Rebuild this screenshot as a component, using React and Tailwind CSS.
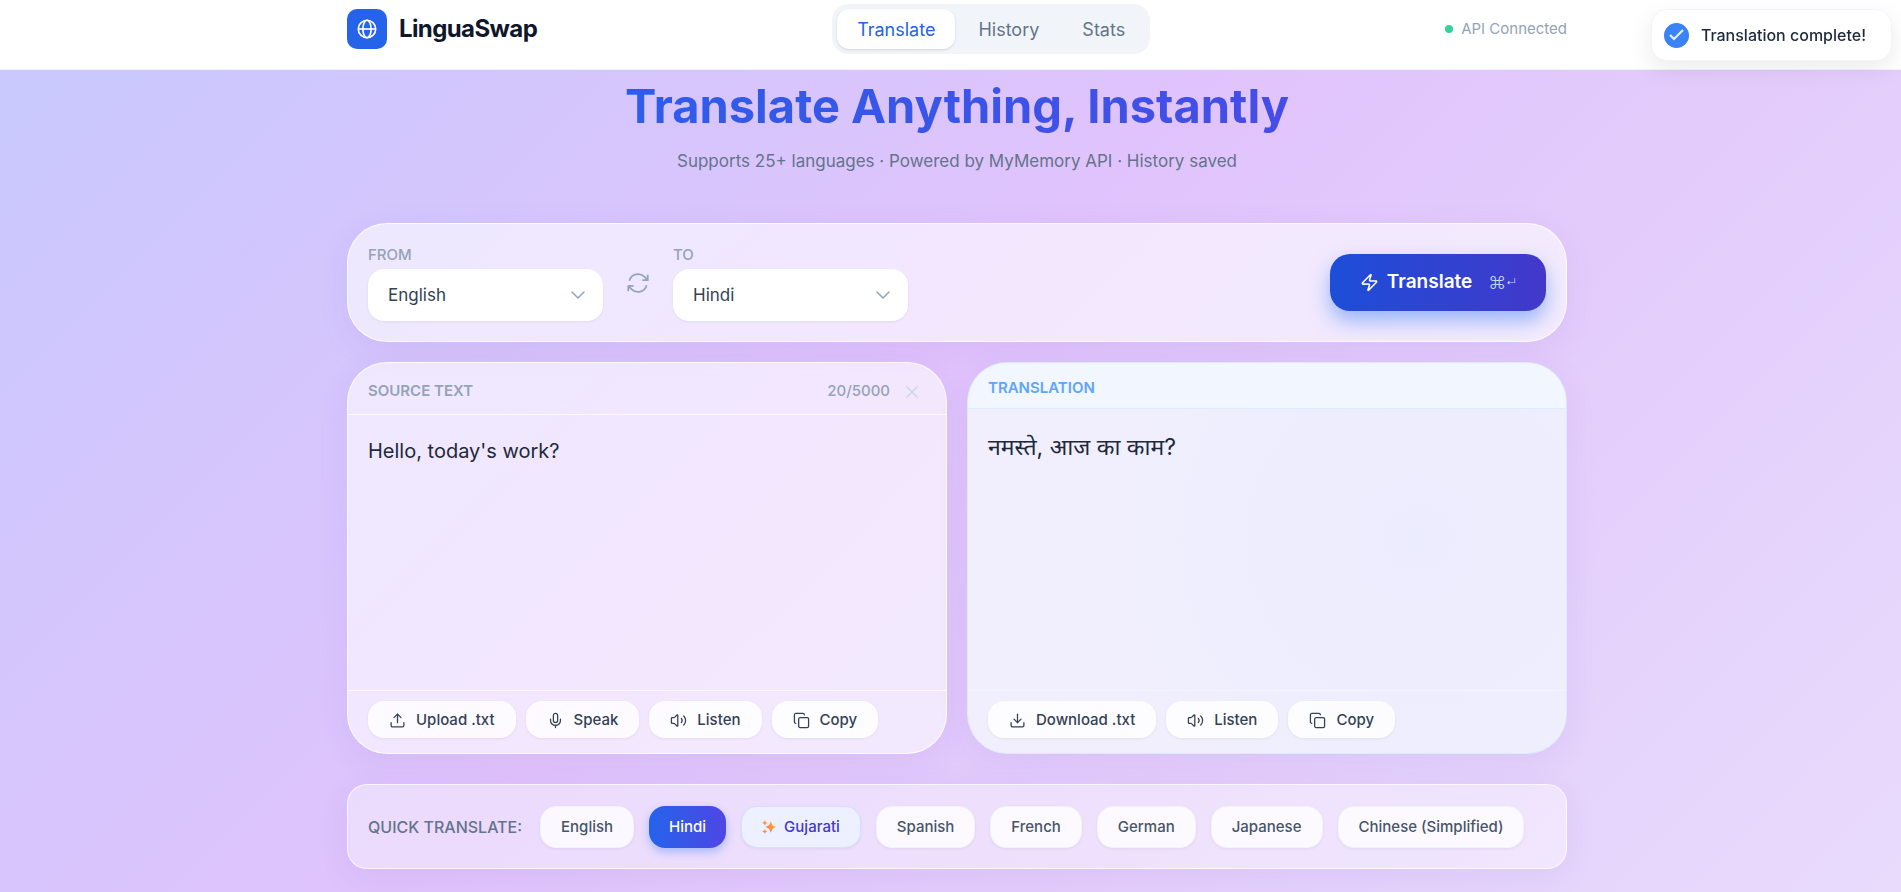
import { Zap, Upload, Download, Mic, Volume2, Copy, X, ChevronDown } from 'lucide-react';

const LANGUAGES = ['English', 'Hindi', 'Gujarati', 'Spanish', 'French', 'German', 'Japanese', 'Chinese (Simplified)'];
const TABS = ['Translate', 'History', 'Stats'];

const cardStyles = 'border shadow-[0_8px_32px_rgba(99,60,180,0.08)]';
const actionStyles = 'flex h-[37px] items-center gap-[10px] rounded-2xl bg-white/85 px-[21px] pt-px text-[15px] font-medium text-[#334155] shadow-[0_1px_3px_rgba(0,0,0,0.06)]';
const chipStyles = 'flex h-[42px] items-center rounded-2xl px-5 pt-px text-[15px] font-medium';

function GlobeIcon() {
  return (
    <svg width="22" height="22" viewBox="0 0 24 24" fill="none" stroke="currentColor" strokeWidth="1.8">
      <circle cx="12" cy="12" r="9.5" />
      <ellipse cx="12" cy="12" rx="4.5" ry="9.5" />
      <path d="M2.5 12h19" />
    </svg>
  );
}

function SwapIcon() {
  return (
    <svg width="26" height="26" viewBox="0 0 24 24" fill="none" stroke="currentColor" strokeWidth="1.6">
      <path d="M16.023 9.348h4.992v-.001M2.985 19.644v-4.992m0 0h4.992m-4.993 0 3.181 3.183a8.25 8.25 0 0 0 13.803-3.7M4.031 9.865a8.25 8.25 0 0 1 13.803-3.7l3.181 3.182m0-4.991v4.99" />
    </svg>
  );
}

function SparklesIcon() {
  return (
    <svg width="14" height="14" viewBox="0 0 24 24">
      <defs>
        <linearGradient id="spark" x1="0" y1="1" x2="1" y2="0">
          <stop offset="0" stopColor="#fb7185" />
          <stop offset="0.5" stopColor="#fb923c" />
          <stop offset="1" stopColor="#fcd34d" />
        </linearGradient>
      </defs>
      <g fill="url(#spark)">
        <path d="M15 2l3 7 6 3-6 3-3 7-3-7-6-3 6-3z" />
        <path d="M5 0l1.5 3.5L10 5 6.500 6.500 5 10 3.500 6.500 0 5l3.500-1.500z" />
        <path d="M5 15l1.300 3.200L9.500 19.500l-3.200 1.300L5 24l-1.300-3.200L.5 19.500l3.200-1.300z" />
      </g>
    </svg>
  );
}

function LanguageSelect({ id, label, value }) {
  return (
    <div className="flex w-[235px] flex-col gap-1">
      <label htmlFor={id} className="text-[15px] leading-5 font-medium text-[#94a3b8] uppercase">{label}</label>
      <div className="relative">
        <select
          id={id}
          defaultValue={value}
          className="h-[52px] w-full appearance-none rounded-2xl bg-white px-5 pt-[2px] text-[17px] text-[#334155] shadow-[0_1px_3px_rgba(0,0,0,0.06)]"
        >
          {LANGUAGES.map(l => <option key={l}>{l}</option>)}
        </select>
        <ChevronDown size={24} strokeWidth={1.5} className="pointer-events-none absolute top-[14px] right-[13px] text-[#94a3b8]" />
      </div>
    </div>
  );
}

function ActionButton({ icon: Icon, children }) {
  return (
    <button className={actionStyles}>
      <Icon size={17} strokeWidth={1.8} /> {children}
    </button>
  );
}

function Header() {
  return (
    <header className="border-b border-[#f1f5f9] bg-white pt-1 pb-[15px] pl-[13px]">
      <div className="mx-auto flex max-w-[1220px] items-center justify-between">
        <div className="flex items-center gap-3">
          <div className="flex h-10 w-10 items-center justify-center rounded-[10px] bg-[#2563eb] text-white">
            <GlobeIcon />
          </div>
          <span className="text-[24px] leading-8 font-bold tracking-tight text-[#0f172a]">LinguaSwap</span>
        </div>

        <nav className="flex gap-[3px] rounded-2xl bg-[#f1f5f9] p-[5px]">
          {TABS.map(tab => (
            <button
              key={tab}
              className={`h-10 rounded-xl px-5 text-[18px] ${tab === 'Translate' ? 'bg-white text-[#2563eb] shadow-sm' : 'text-[#64748b]'}`}
            >
              {tab}
            </button>
          ))}
        </nav>

        <div className="flex items-center gap-2 text-[15px] text-[#94a3b8]">
          <span className="h-2 w-2 rounded-full bg-[#34d399]" />
          API Connected
        </div>
      </div>
    </header>
  );
}

function Toast() {
  return (
    <div role="status" className="fixed top-[9px] right-[9px] flex h-[52px] items-center gap-3 rounded-2xl border border-[#f1f5f9] bg-white pr-[25px] pl-3 text-[16px] font-medium text-[#1e293b] shadow-[0_8px_24px_rgba(0,0,0,0.08)]">
      <span className="flex h-[25px] w-[25px] items-center justify-center rounded-full bg-[#3b82f6]">
        <svg width="15" height="12" viewBox="0 0 15 12" fill="none" stroke="#e5efff" strokeWidth="2.2">
          <path d="M1 6l4 4 9-9" />
        </svg>
      </span>
      Translation complete!
    </div>
  );
}

export default function App() {
  return (
    <div className="min-h-screen bg-[linear-gradient(135deg,#c7c9fe_0%,#e0c3fc_46%,#e8dbfc_100%)] font-['Inter',sans-serif]">
      <Header />

      <main className="pb-[23px] pl-[13px]">
        <div className="mx-auto max-w-[1220px]">
          <div className="pt-[6px] text-center">
            <h1 className="bg-[linear-gradient(90deg,#2563eb,#4f46e5)] bg-clip-text text-[47px] leading-[60px] font-bold text-transparent">
              Translate Anything, Instantly
            </h1>
            <p className="mt-[11px] text-[17px] leading-7 text-[#64748b]">Supports 25+ languages · Powered by MyMemory API · History saved</p>
          </div>

          <section className={`mt-12 flex h-[119px] items-center justify-between rounded-[40px] border-white/80 bg-white/60 px-5 ${cardStyles}`}>
            <div className="flex items-center">
              <LanguageSelect id="from" label="From" value="English" />
              <button aria-label="Swap languages" className="flex w-[70px] justify-center text-[#94a3b8]">
                <SwapIcon />
              </button>
              <LanguageSelect id="to" label="To" value="Hindi" />
            </div>
            <button className="flex h-[57px] items-center rounded-[20px] bg-[linear-gradient(90deg,#1d4ed8,#4338ca)] px-[30px] text-[19px] font-semibold text-white shadow-[0_10px_20px_rgba(59,130,246,0.5)]">
              <Zap size={19} strokeWidth={2} className="mr-2" />
              Translate
              <span className="ml-4 flex items-center font-light text-[#bfdbfe]">
                <span className="text-[18px]">⌘</span>
                <span className="text-[10px]">↵</span>
              </span>
            </button>
          </section>

          <div className="mt-5 grid grid-cols-2 gap-5">
            <section className={`flex h-[392px] flex-col overflow-hidden rounded-[40px] border-white/80 bg-white/60 ${cardStyles}`}>
              <div className="flex h-[52px] items-center justify-between border-b border-white/80 pt-[6px] pr-5 pl-5 text-[15px] text-[#94a3b8]">
                <label htmlFor="source" className="font-semibold uppercase">Source text</label>
                <div className="flex items-center gap-2">
                  <span className="font-medium">20/5000</span>
                  <button aria-label="Clear" className="px-1 text-[#cbd5e1]"><X size={20} strokeWidth={1.5} /></button>
                </div>
              </div>
              <textarea
                id="source"
                defaultValue="Hello, today's work?"
                className="flex-1 resize-none px-5 py-5 text-[20px] leading-8 text-[#1e293b] outline-none"
              />
              <div className="flex gap-[10px] border-t border-white/70 px-5 pt-[10px] pb-[15px]">
                <ActionButton icon={Upload}>Upload .txt</ActionButton>
                <ActionButton icon={Mic}>Speak</ActionButton>
                <ActionButton icon={Volume2}>Listen</ActionButton>
                <ActionButton icon={Copy}>Copy</ActionButton>
              </div>
            </section>

            <section className={`flex h-[392px] flex-col overflow-hidden rounded-[40px] border-[#dbeafe] bg-[radial-gradient(circle_at_75%_45%,#ebecfe_0%,#f1effd_65%)] ${cardStyles}`}>
              <h2 className="flex h-[46px] items-center border-b border-[#dbeafe]/80 bg-[#f1f6ff] px-5 pt-[6px] text-[15px] font-semibold text-[#60a5fa] uppercase">Translation</h2>
              <p lang="hi" className="flex-1 px-5 py-5 font-['Inter','Noto_Sans','Noto_Sans_Devanagari',sans-serif] text-[23px] leading-9 text-[#1e293b]">
                नमस्ते, आज का काम?
              </p>
              <div className="flex gap-[10px] border-t border-[#eff6ff] px-5 pt-[10px] pb-[15px]">
                <ActionButton icon={Download}>Download .txt</ActionButton>
                <ActionButton icon={Volume2}>Listen</ActionButton>
                <ActionButton icon={Copy}>Copy</ActionButton>
              </div>
            </section>
          </div>

          <section className={`mt-[30px] flex h-[85px] items-center rounded-[20px] border-white/70 bg-white/40 px-5 ${cardStyles}`}>
            <h2 className="mr-[18px] pt-px text-[16px] font-medium text-[#64748b] uppercase">Quick translate:</h2>
            <div className="flex items-center gap-[15px]">
              {LANGUAGES.map(l => {
                if (l === 'Hindi') {
                  return <button key={l} className={`${chipStyles} bg-[linear-gradient(90deg,#2563eb,#4f46e5)] font-bold text-white shadow-[0_4px_10px_rgba(59,130,246,0.4)]`}>{l}</button>;
                }
                if (l === 'Gujarati') {
                  return <button key={l} className={`${chipStyles} gap-2 border border-[#bfdbfe]/60 bg-[#edf0fe] text-[#4338ca] shadow-[0_1px_3px_rgba(0,0,0,0.06)]`}><SparklesIcon /> {l}</button>;
                }
                return <button key={l} className={`${chipStyles} border border-[#f1f5f9] bg-white/80 text-[#475569] shadow-[0_1px_3px_rgba(0,0,0,0.06)]`}>{l}</button>;
              })}
            </div>
          </section>
        </div>
      </main>

      <Toast />
    </div>
  );
}
